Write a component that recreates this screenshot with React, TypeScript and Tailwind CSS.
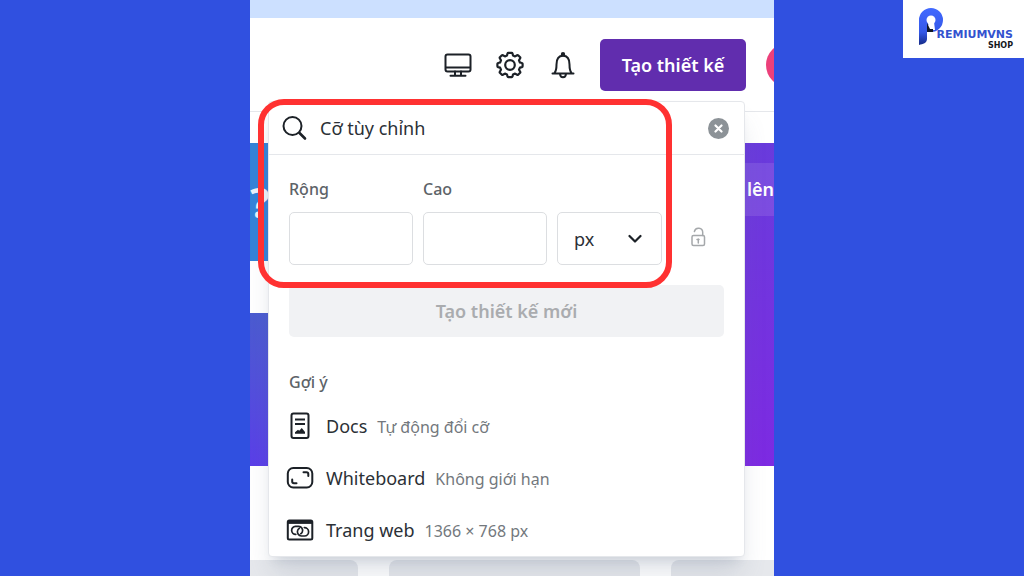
import type { ReactNode } from 'react';

interface Suggestion {
  name: string;
  detail: string;
  icon: ReactNode;
}

function DisplayIcon() {
  return (
    <svg width="28" height="28" viewBox="0 0 28 28" fill="none" stroke="currentColor" strokeWidth="2">
      <rect x="1.500" y="3.500" width="25" height="17" rx="2" />
      <path d="M2 16.500h24M11 20.500v4M17 20.500v4M6.500 24.700h15" strokeLinecap="round" />
    </svg>
  );
}

function GearIcon() {
  return (
    <svg width="28" height="28" viewBox="0 0 28 28" fill="none" stroke="currentColor" strokeWidth="2.200" strokeLinejoin="round">
      <circle cx="14" cy="14" r="4.800" />
      <path d="M12.300 1.800h3.400q.6 0 .8.700l.5 2 2.100.9 2-1.200q.6-.3 1 .1l2 2q.4.500.1 1l-1.200 2 .9 2.200 2 .5q.7.200.7.800v2.500q0 .6-.7.800l-2 .5-.9 2.100 1.200 2q.3.500-.1 1l-2 2q-.4.400-1 .1l-2-1.200-2.100.9-.5 2q-.2.700-.8.700h-3.400q-.6 0-.8-.7l-.5-2-2.100-.9-2 1.200q-.6.300-1-.1l-2-2q-.4-.5-.1-1l1.200-2-.9-2.100-2-.5q-.7-.2-.7-.8v-2.500q0-.6.7-.8l2-.5.9-2.200-1.200-2q-.3-.5.1-1l2-2q.4-.4 1-.1l2 1.200 2.100-.9.500-2q.2-.7.8-.7z" />
    </svg>
  );
}

function BellIcon() {
  return (
    <svg width="28" height="28" viewBox="0 0 28 28" fill="none" stroke="currentColor" strokeWidth="2" strokeLinecap="round" strokeLinejoin="round">
      <circle cx="15" cy="3.300" r="1.200" fill="currentColor" />
      <path d="M4.500 22.500h21M6.500 22c1.700-2 2-4 2-8.500C8.500 8 10.800 4.800 15 4.800s6.500 3.200 6.500 8.700c0 4.500.3 6.500 2 8.500M12 23c.2 2.300 1.300 3.300 3 3.300s2.800-1 3-3.300" />
    </svg>
  );
}

function SearchIcon() {
  return (
    <svg width="26" height="26" viewBox="0 0 26 26" fill="none" stroke="currentColor" strokeWidth="2" strokeLinecap="round">
      <circle cx="10.500" cy="11" r="9" />
      <path d="M17.500 18l5.500 5.500" strokeWidth="2.600" />
    </svg>
  );
}

function UnlockIcon() {
  return (
    <svg width="16" height="20" viewBox="0 0 16 20" fill="none" stroke="currentColor" strokeWidth="1.500">
      <rect x="2" y="8.500" width="12.500" height="10" rx="1.500" />
      <path d="M12.700 8.500V5.500a4.200 4.200 0 0 0-8.300-1M8.300 12v4M7 12.500h2" strokeLinecap="round" />
    </svg>
  );
}

function DocsIcon() {
  return (
    <svg width="28" height="28" viewBox="0 0 28 28" fill="none" stroke="currentColor" strokeWidth="2">
      <rect x="5.500" y="1.500" width="17" height="24.500" rx="2" />
      <path d="M9 7.500h10M9 12h10" />
      <path d="M9 21.800v-1.600l3-2.500 1.200 1 2.600-2.700 3.200 4v1.800z" fill="currentColor" stroke="none" />
    </svg>
  );
}

function WhiteboardIcon() {
  return (
    <svg width="28" height="28" viewBox="0 0 28 28" fill="none" stroke="currentColor" strokeWidth="2" strokeLinecap="round">
      <rect x="1.800" y="4" width="24.500" height="19.500" rx="5.500" />
      <path d="M17.500 8.200h3a1.800 1.800 0 0 1 1.800 1.800v2M6.200 15.500v2a1.800 1.800 0 0 0 1.800 1.800h2.500" />
    </svg>
  );
}

function WebsiteIcon() {
  return (
    <svg width="28" height="28" viewBox="0 0 28 28" fill="none" stroke="currentColor" strokeWidth="2">
      <rect x="1.800" y="4.500" width="24.500" height="19" rx="1.500" />
      <path d="M2 6.200h24" strokeWidth="3.400" />
      <path
        d="M9.800 18.400a4 4 0 0 1-.3-8h3.200a4 4 0 0 1 3.600 5.600c-.3.800-.8 1.300-1.500 1.700M18.300 11.600a4.200 4.200 0 0 1 .2 8.400h-3.100a4.200 4.200 0 0 1-3.700-5.800c.3-.8.800-1.400 1.500-1.800"
        strokeWidth="1.700"
        strokeLinecap="round"
      />
    </svg>
  );
}

const suggestions: Suggestion[] = [
  { name: 'Docs', detail: 'Tự động đổi cỡ', icon: <DocsIcon /> },
  { name: 'Whiteboard', detail: 'Không giới hạn', icon: <WhiteboardIcon /> },
  { name: 'Trang web', detail: '1366 × 768 px', icon: <WebsiteIcon /> },
];

function Header() {
  return (
    <header className="flex h-[94px] items-center justify-end gap-6 border-b border-gray-200 bg-white">
      <button type="button" aria-label="Màn hình"><DisplayIcon /></button>
      <button type="button" aria-label="Cài đặt"><GearIcon /></button>
      <button type="button" aria-label="Thông báo"><BellIcon /></button>
      <div className="flex items-center gap-5 overflow-hidden">
        <button type="button" className="h-[52px] w-[146px] rounded-[5px] bg-[#612dae] text-lg font-semibold text-white">
          Tạo thiết kế
        </button>
        <div className="-mr-9 size-11 shrink-0 rounded-full bg-[#ec407a]" />
      </div>
    </header>
  );
}

function Banner() {
  return (
    <section className="mt-[31px] flex h-[323px]">
      <div className="flex flex-1 flex-col">
        <div className="h-[118px] bg-[#3483d8] pt-[31px]">
          <p className="text-[42px] leading-[56px] font-semibold text-white/90">?</p>
        </div>
        <div className="h-[52px] bg-white" />
        <div className="flex-1 bg-linear-to-b from-[#4a5bd0] to-[#5a3ee8]" />
      </div>
      <div className="flex-1 bg-linear-to-b from-[#693bdc] to-[#7d2ae2] pt-5">
        <p className="h-[53px] bg-white/10 text-right text-lg leading-[53px] font-semibold text-white">lên</p>
      </div>
    </section>
  );
}

function SizeMenu() {
  return (
    <div className="absolute top-[101px] right-[29px] left-[18px] rounded border border-gray-200 bg-white shadow-xl shadow-slate-500/20">
      <div className="flex h-[53px] items-center border-b border-gray-200 pr-[15px] pl-[13px]">
        <SearchIcon />
        <input
          type="text"
          aria-label="Tìm kích thước"
          defaultValue="Cỡ tùy chỉnh"
          className="ml-3 min-w-0 flex-1 text-lg text-[#2b3036] outline-none"
        />
        <button type="button" aria-label="Xóa" className="flex size-[21px] items-center justify-center rounded-full bg-[#8c9297] text-white">
          <svg width="9" height="9" viewBox="0 0 9 9" stroke="currentColor" strokeWidth="2.200" strokeLinecap="round">
            <path d="M1.500 1.500l6 6M7.500 1.500l-6 6" />
          </svg>
        </button>
      </div>

      <form className="px-5 pt-[22px]">
        <div className="flex items-end gap-[10px]">
          <label className="flex flex-1 flex-col gap-[11px] text-base leading-6 font-medium text-[#5d6368]">
            Rộng
            <input type="text" className="h-[53px] w-full rounded-[5px] border border-[#dcdee1] px-3" />
          </label>
          <label className="flex flex-1 flex-col gap-[11px] text-base leading-6 font-medium text-[#5d6368]">
            Cao
            <input type="text" className="h-[53px] w-full rounded-[5px] border border-[#dcdee1] px-3" />
          </label>
          <div className="relative">
            <select
              aria-label="Đơn vị"
              defaultValue="px"
              className="block h-[53px] w-[105px] appearance-none rounded-[5px] border border-[#dcdee1] px-4 text-lg text-[#2b3036]"
            >
              <option>px</option>
            </select>
            <svg className="pointer-events-none absolute top-[22px] right-5" width="14" height="10" viewBox="0 0 14 10" fill="none" stroke="currentColor" strokeWidth="2.200" strokeLinecap="round" strokeLinejoin="round">
              <path d="M1.500 2l5.500 5.500L12.500 2" />
            </svg>
          </div>
          <button type="button" aria-label="Khóa tỷ lệ" className="flex h-[53px] w-[52px] items-center justify-center pb-1 text-[#a5a8ab]">
            <UnlockIcon />
          </button>
        </div>
        <button type="button" disabled className="mt-5 h-[52px] w-full rounded-[5px] bg-[#f1f2f4] text-lg font-semibold text-[#aaacaf]">
          Tạo thiết kế mới
        </button>
      </form>

      <h2 className="mt-[33px] px-5 text-base leading-6 font-medium text-[#5d6368]">Gợi ý</h2>
      <ul className="pt-[6px]">
        {suggestions.map((item) => (
          <li key={item.name}>
            <button type="button" className="flex h-[52px] w-full items-center gap-3 px-[17px] text-left">
              {item.icon}
              <span className="flex items-baseline gap-[10px]">
                <span className="text-lg text-[#2b3036]">{item.name}</span>
                <span className="text-base text-[#73787d]">{item.detail}</span>
              </span>
            </button>
          </li>
        ))}
      </ul>
    </div>
  );
}

function ShopLogo() {
  return (
    <div className="absolute top-0 right-0 flex h-[58px] w-[121px] items-end justify-end bg-white pr-[11px] pb-2">
      <svg className="absolute top-2 left-4" width="24" height="37" viewBox="0 0 24 37" aria-hidden="true">
        <defs>
          <linearGradient id="shop" x1="0" y1="0" x2="0" y2="1">
            <stop offset="0" stopColor="#4169ff" />
            <stop offset="0.650" stopColor="#3458e8" />
            <stop offset="1" stopColor="#142a86" />
          </linearGradient>
        </defs>
        <path d="M0 37V12a12 12 0 1 1 12 12H8v7c0 4-4 5-8 6z" fill="url(#shop)" />
        <circle cx="12" cy="12" r="4.500" fill="#fff" />
        <path d="M10 14h5l1 8H8z" fill="#fff" />
        <path d="M8 15v9h6v-3h-3z" fill="#111827" />
      </svg>
      <div className="relative flex flex-col items-end font-['DejaVu_Sans',sans-serif] font-bold">
        <span className="text-[11px] leading-[12px] text-[#3352cf]">REMIUMVNS</span>
        <span className="text-[8px] leading-[9px] text-[#15171c]">SHOP</span>
      </div>
    </div>
  );
}

export default function App() {
  return (
    <div className="relative min-h-screen overflow-hidden bg-[#3050e0] font-['Noto_Sans',sans-serif] text-[#1c2127]">
      <main className="relative mx-auto flex min-h-screen max-w-[524px] flex-col overflow-hidden bg-white">
        <div className="h-[18px] bg-[#cce0ff]" />
        <Header />
        <Banner />
        <div className="mt-[94px] flex flex-1 gap-[31px]">
          <div className="w-[108px] rounded-tr-lg bg-[#e6e8ec]" />
          <div className="flex-1 rounded-t-lg bg-[#e6e8ec]" />
          <div className="w-[103px] rounded-tl-lg bg-[#e6e8ec]" />
        </div>
        <SizeMenu />
        <div className="pointer-events-none absolute top-[99px] right-[102px] left-2 h-[189px] rounded-[26px] border-[6px] border-[#ff3131]" />
      </main>
      <ShopLogo />
    </div>
  );
}
